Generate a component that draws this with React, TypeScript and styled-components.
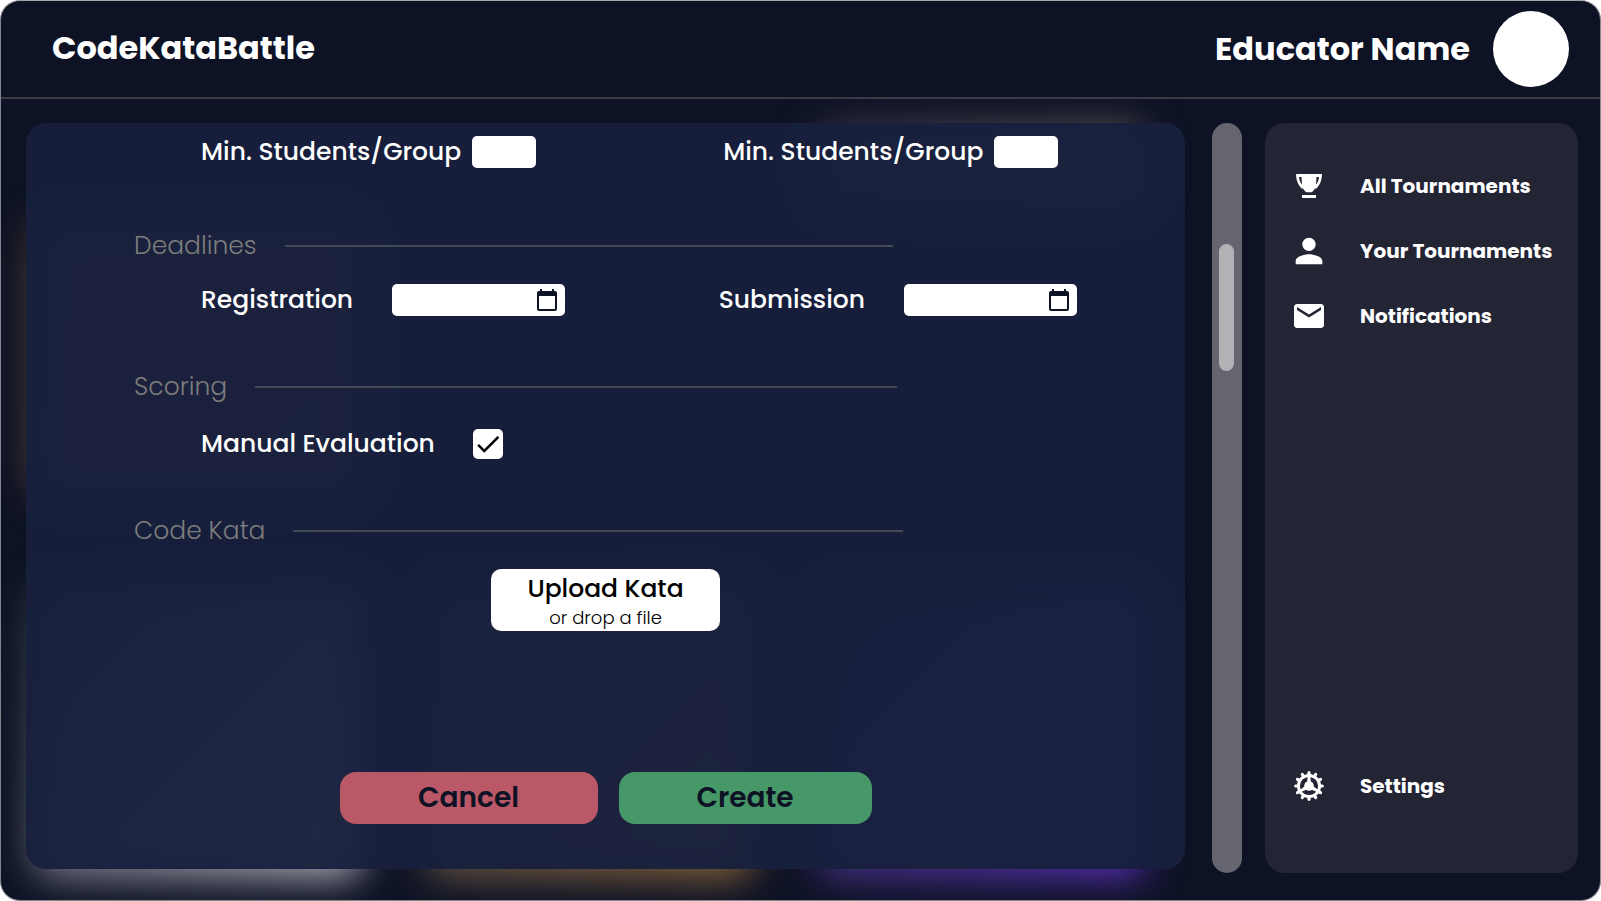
import React, { useState } from 'react';
import styled, { createGlobalStyle } from 'styled-components';
import { MdCalendarToday, MdCheck, MdEmail, MdPerson } from 'react-icons/md';

const GlobalStyle = createGlobalStyle`
  *, *::before, *::after { box-sizing: border-box; }
  body {
    margin: 0;
    background: #ffffff;
    color: #ffffff;
    font-family: Poppins, Inter, "Open Sans", sans-serif;
  }
  h1, h2, p { margin: 0; }
  button, input { font-family: inherit; }
`;

const Frame = styled.div`
  display: flex;
  flex-direction: column;
  min-height: 100vh;
  overflow: hidden;
  border: 1px solid #83858d;
  border-top-color: #a2a5aa;
  border-radius: 20px;
  background: #0d1224;
`;

const Header = styled.header`
  display: flex;
  align-items: center;
  justify-content: space-between;
  height: 98px;
  padding: 0 31px 0 51px;
  border-bottom: 2px solid #3a3b43;
`;

const Brand = styled.h1`
  padding-bottom: 3px;
  font-size: 32px;
  line-height: 40px;
  font-weight: 700;
`;

const Profile = styled.div`
  display: flex;
  align-items: center;
  gap: 23px;
  font-size: 32px;
  line-height: 40px;
  font-weight: 700;
`;

const Avatar = styled.span`
  width: 76px;
  height: 76px;
  border-radius: 50%;
  background: #ffffff;
`;

const Content = styled.div`
  position: relative;
  isolation: isolate;
  overflow: hidden;
  flex: 1;
  display: flex;
  padding: 24px 22px 27px 25px;
`;

/* Blurred tournament cards glowing behind the form panel. */
const Backdrop = styled.div`
  position: absolute;
  inset: 0;
  z-index: -1;
  display: grid;
  grid-template-columns: 21% 21% 21%;
  grid-template-rows: 80fr 275fr 366fr;
  column-gap: 4%;
  row-gap: 15px;
  padding: 27px 0 22px 32px;
  filter: blur(19px);
`;

const GlowCard = styled.div<{ $from: string; $to: string; $column: number; $row: number }>`
  grid-column: ${(p) => p.$column};
  grid-row: ${(p) => p.$row};
  margin-top: ${(p) => (p.$row === 3 ? 75 : 0)}px;
  border-radius: 20px;
  background: linear-gradient(135deg, ${(p) => p.$from}, ${(p) => p.$to});
`;

const FormPanel = styled.form`
  flex: 1;
  display: flex;
  flex-direction: column;
  margin-bottom: 4px;
  padding: 13px 108px 45px;
  border-radius: 20px;
  background: rgba(23, 32, 61, 0.95);
`;

const Section = styled.section<{ $top: number; $gap: number }>`
  display: flex;
  flex-direction: column;
  gap: ${(p) => p.$gap}px;
  margin-top: ${(p) => p.$top}px;
`;

const SectionTitle = styled.h2<{ $end: number }>`
  display: flex;
  align-items: center;
  gap: 28px;
  margin-right: ${(p) => p.$end}px;
  color: #7c7c7c;
  font-size: 25px;
  line-height: 40px;
  font-weight: 300;

  &::after {
    content: "";
    flex: 1;
    height: 2px;
    background: #454956;
  }
`;

const FieldRow = styled.div`
  display: grid;
  grid-template-columns: 31fr 21fr;
  padding-left: 67px;
`;

const Field = styled.div<{ $gap: number }>`
  display: flex;
  align-items: center;
  gap: ${(p) => p.$gap}px;
  height: 32px;
`;

const FieldLabel = styled.label`
  font-size: 25px;
  line-height: 32px;
  font-weight: 500;
  white-space: nowrap;
`;

const CountInput = styled.input`
  width: 64px;
  height: 32px;
  padding: 0 8px;
  border: 0;
  border-radius: 5px;
  background: #ffffff;
  font-size: 18px;
`;

const DateBox = styled.div`
  display: flex;
  align-items: center;
  width: 173px;
  height: 32px;
  padding-right: 6px;
  border-radius: 5px;
  background: #ffffff;
`;

const DateInput = styled.input`
  flex: 1;
  min-width: 0;
  height: 32px;
  padding: 0 8px;
  border: 0;
  border-radius: 5px;
  background: transparent;
  font-size: 18px;
`;

const CalendarButton = styled.button`
  display: flex;
  padding: 0;
  border: 0;
  background: transparent;
  color: #0d1224;
  cursor: pointer;
`;

const CheckWrap = styled.span`
  display: grid;
  place-items: center;
  width: 30px;
  height: 30px;
  border-radius: 5px;
  background: #ffffff;

  > * { grid-area: 1 / 1; }

  svg {
    color: #000000;
    pointer-events: none;
    visibility: hidden;
  }

  input:checked + svg { visibility: visible; }
`;

const CheckInput = styled.input`
  appearance: none;
  width: 30px;
  height: 30px;
  margin: 0;
  cursor: pointer;
`;

const UploadButton = styled.button`
  display: flex;
  flex-direction: column;
  align-items: center;
  justify-content: center;
  align-self: center;
  width: 229px;
  height: 62px;
  padding: 4px 0 0;
  border: 0;
  border-radius: 10px;
  background: #ffffff;
  color: #000000;
  cursor: pointer;
`;

const UploadTitle = styled.span`
  font-size: 25px;
  line-height: 32px;
  font-weight: 500;
`;

const UploadHint = styled.span`
  font-size: 18px;
  line-height: 26px;
  font-weight: 300;
`;

const Actions = styled.div`
  display: flex;
  justify-content: center;
  gap: 21px;
  margin-top: auto;
`;

const ActionButton = styled.button<{ $color: string; $width: number }>`
  width: ${(p) => p.$width}px;
  height: 52px;
  padding: 0;
  border: 0;
  border-radius: 16px;
  background: ${(p) => p.$color};
  color: #0d1224;
  font-size: 28px;
  line-height: 40px;
  font-weight: 600;
  cursor: pointer;
`;

const ScrollTrack = styled.div`
  width: 30px;
  margin: 0 23px 0 27px;
  padding: 121px 8px 0 7px;
  border-radius: 15px;
  background: #64656f;
`;

const ScrollThumb = styled.div`
  height: 127px;
  border-radius: 8px;
  background: #b1b1b6;
`;

const Sidebar = styled.nav`
  display: flex;
  flex-direction: column;
  width: 313px;
  padding: 30px 20px 55px 24px;
  border-radius: 20px;
  background: #232535;
`;

const NavLink = styled.a<{ $last?: boolean }>`
  display: grid;
  grid-template-columns: 40px 1fr;
  align-items: center;
  gap: 31px;
  height: 65px;
  margin-top: ${(p) => (p.$last ? 'auto' : 0)};
  color: #ffffff;
  font-size: 20px;
  line-height: 32px;
  font-weight: 700;
  text-decoration: none;
  white-space: nowrap;

  svg { justify-self: center; }
`;

function TrophyIcon() {
  return (
    <svg width="26" height="24" viewBox="0 0 26 24" fill="currentColor" aria-hidden="true">
      <path
        fillRule="evenodd"
        d="M0 0H26C26 6 24 11 20.5 14.5H19L17 17.2L15.5 18.3H10.5L9 17.2L7 14.5H5.5C2 11 0 6 0 0ZM3 3C3.300 6 4.200 8.500 6 10.500L5.500 3ZM23 3H20.500L20 10.500C21.800 8.500 22.700 6 23 3Z"
      />
      <path d="M6 21H20V24H6Z" />
    </svg>
  );
}

function GearIcon() {
  const teeth = Array.from({ length: 12 }, (_, i) => i * 30);
  return (
    <svg width="30" height="30" viewBox="0 0 30 30" fill="currentColor" aria-hidden="true">
      <g stroke="currentColor" fill="none">
        <circle cx="15" cy="15" r="10.6" strokeWidth="3" />
        {teeth.map((a) => (
          <path key={a} d="M15 4V1.700" strokeWidth="3.200" strokeLinecap="round" transform={`rotate(${a} 15 15)`} />
        ))}
      </g>
      {[0, 120, 240].map((a) => (
        <path key={a} d="M13.800 5H16.200L17 12H13Z" transform={`rotate(${a} 15 15)`} />
      ))}
      <circle cx="15" cy="15" r="4.800" />
    </svg>
  );
}

function DateField({ id, label }: { id: string; label: string }) {
  return (
    <Field $gap={39}>
      <FieldLabel htmlFor={id}>{label}</FieldLabel>
      <DateBox>
        <DateInput id={id} type="text" />
        <CalendarButton type="button" aria-label={`Pick ${label.toLowerCase()} date`}>
          <MdCalendarToday size={24} />
        </CalendarButton>
      </DateBox>
    </Field>
  );
}

export default function App() {
  const [manual, setManual] = useState(true);

  return (
    <>
      <GlobalStyle />
      <Frame>
        <Header>
          <Brand>CodeKataBattle</Brand>
          <Profile>
            Educator Name
            <Avatar />
          </Profile>
        </Header>

        <Content>
          <Backdrop aria-hidden="true">
            <GlowCard $column={3} $row={1} $from="#3a3a48" $to="#66625e" />
            <GlowCard $column={1} $row={2} $from="#5a422c" $to="#6a4c4a" />
            <GlowCard $column={1} $row={3} $from="#3a3e4c" $to="#b8b9c2" />
            <GlowCard $column={2} $row={3} $from="#3c3c48" $to="#8e683a" />
            <GlowCard $column={3} $row={3} $from="#303048" $to="#5e30c0" />
          </Backdrop>

          <FormPanel onSubmit={(e) => e.preventDefault()}>
            <FieldRow>
              <Field $gap={11}>
                <FieldLabel htmlFor="min-students">Min. Students/Group</FieldLabel>
                <CountInput id="min-students" type="text" inputMode="numeric" />
              </Field>
              <Field $gap={11}>
                <FieldLabel htmlFor="max-students">Min. Students/Group</FieldLabel>
                <CountInput id="max-students" type="text" inputMode="numeric" />
              </Field>
            </FieldRow>

            <Section $top={58} $gap={18}>
              <SectionTitle $end={184}>Deadlines</SectionTitle>
              <FieldRow>
                <DateField id="registration" label="Registration" />
                <DateField id="submission" label="Submission" />
              </FieldRow>
            </Section>

            <Section $top={51} $gap={21}>
              <SectionTitle $end={180}>Scoring</SectionTitle>
              <FieldRow>
                <Field $gap={38}>
                  <FieldLabel htmlFor="manual">Manual Evaluation</FieldLabel>
                  <CheckWrap>
                    <CheckInput
                      id="manual"
                      type="checkbox"
                      checked={manual}
                      onChange={(e) => setManual(e.target.checked)}
                    />
                    <MdCheck size={30} />
                  </CheckWrap>
                </Field>
              </FieldRow>
            </Section>

            <Section $top={51} $gap={18}>
              <SectionTitle $end={174}>Code Kata</SectionTitle>
              <UploadButton type="button">
                <UploadTitle>Upload Kata</UploadTitle>
                <UploadHint>or drop a file</UploadHint>
              </UploadButton>
            </Section>

            <Actions>
              <ActionButton type="button" $color="#ba5867" $width={258}>Cancel</ActionButton>
              <ActionButton type="submit" $color="#479868" $width={253}>Create</ActionButton>
            </Actions>
          </FormPanel>

          <ScrollTrack>
            <ScrollThumb />
          </ScrollTrack>

          <Sidebar>
            <NavLink href="#all">
              <TrophyIcon />
              All Tournaments
            </NavLink>
            <NavLink href="#yours">
              <MdPerson size={40} />
              Your Tournaments
            </NavLink>
            <NavLink href="#notifications">
              <MdEmail size={36} />
              Notifications
            </NavLink>
            <NavLink href="#settings" $last>
              <GearIcon />
              Settings
            </NavLink>
          </Sidebar>
        </Content>
      </Frame>
    </>
  );
}
